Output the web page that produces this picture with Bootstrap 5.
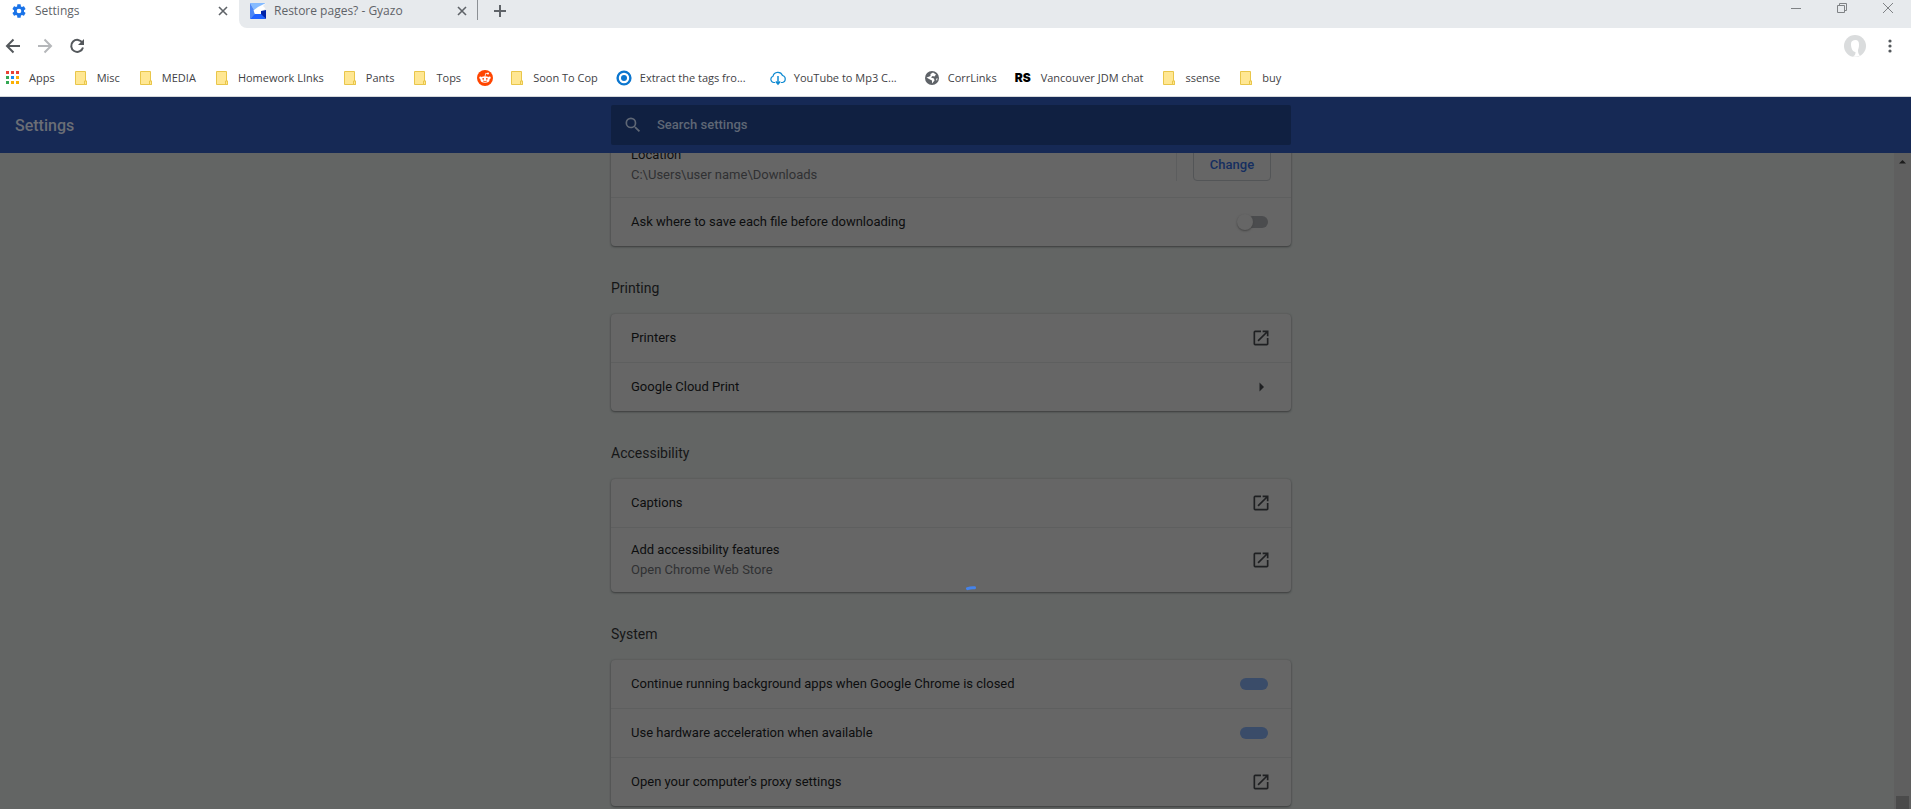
<!DOCTYPE html>
<html lang="en">
<head>
<meta charset="utf-8">
<meta name="viewport" content="width=device-width, initial-scale=1">
<title>Settings</title>
<link href="https://cdn.jsdelivr.net/npm/bootstrap@5.3.0/dist/css/bootstrap.min.css" rel="stylesheet">
<style>
body{font-family:Roboto,"Liberation Sans",sans-serif;font-size:13px;line-height:20px;color:#0d0e0f;background:#636564}
svg{display:block;flex:none}
button{padding:0;border:0;background:none;color:inherit;display:flex;align-items:center;justify-content:center}
.chrome{font-family:"Open Sans","Noto Sans",sans-serif;font-size:11px;line-height:16px;color:#3f4245;background:#fff;border-bottom:1px solid #d5d8db}
.tab-strip{height:28px;font-size:12px}
.tab-a{width:239px;padding:0 11px 6px 11px;color:#5f6368}
.strip-rest{background:#e7eaed;border-bottom-left-radius:8px;color:#5f6368}
.tab-b{width:238px;height:22px;padding:0 10px 0 11px}
.tab-sep{width:1px;height:20px;background:#8c9094}
.new-tab{width:44px;height:22px}
.win-btn{width:46px;height:16px;color:#7f8285}
.toolbar-row{height:36px;padding:0 9px 0 1px}
.tool-btn{width:24px;height:24px;color:#54585c}
.tool-btn:disabled{color:#b5b7ba}
.bookmarks{height:32px;gap:18px;padding:0 5px 4px}
.bookmarks a{display:flex;align-items:center;gap:8px;color:inherit;text-decoration:none;white-space:nowrap}
.bookmarks .long{width:136px}
.bookmarks .icon-only{margin:0 -2px}
.rs-mark{font-family:Inter,"Liberation Sans",sans-serif;font-weight:900;font-size:12px;color:#000;width:18px}
.app-bar{height:56px;background:#162955;padding-right:9px;position:relative}
.app-title{position:absolute;left:15px;top:19px;margin:0;font-size:16px;line-height:20px;font-weight:500;color:#6b6e75}
.page-col{width:100%;max-width:680px}
.search-box{height:40px;background:#102041;border-radius:2px;padding:0 12px;gap:14px;color:#5f6775}
.search-box input{border:0;outline:0;background:none;color:inherit;font-weight:500;font-size:13px;padding:0;line-height:20px}
.search-box input::placeholder{color:#5f6775;opacity:1}
.scroll-area{padding:0 0 3px 8px;min-width:0}
.page-col h2{font-size:14px;line-height:20px;font-weight:400;margin:32px 0 16px;color:#151617}
.panel{background:#666;border-radius:4px;box-shadow:0 1px 2px #3c3e3e,0 0 2px #545656}
.line-item{min-height:48px;padding:0 20px}
.line-item + .line-item{min-height:49px;border-top:1px solid #5e5f5f}
.panel .line-item.two-line{min-height:65px}
.sub{color:#303133}
.icon-box{width:20px;height:20px;color:#1f2022}
.change-wrap{border-left:1px solid #5c5d5e;padding-left:16px}
.change-btn{width:78px;height:32px;border:1px solid #535557;border-radius:4px;color:#152e60;font-weight:500}
.toggle{appearance:none;margin:0 3px 0 0;width:28px;height:12px;border-radius:6px;background:#4b4c4e;position:relative;flex:none}
.toggle:checked{background:#3a4c69}
.toggle:not(:checked)::before{content:"";position:absolute;left:-3px;top:-2px;width:16px;height:16px;border-radius:50%;background:#666;box-shadow:0 1px 2px #444}
.scroll-track{width:17px;background:#5f5f5f;padding:6px 2px 0 2px}
.thumb{height:13px;background:#4b4b4b}
.spinner-arc{position:absolute;left:50%;top:66%;margin-left:10px}
</style>
</head>
<body class="vh-100 d-flex flex-column overflow-hidden">
<svg class="d-none" aria-hidden="true">
  <symbol id="folder" viewBox="0 0 16 16"><path d="M2.500 1.500h10v9.500h1v3.500h-11z" fill="#ffe793" stroke="#e9c64a"/><path d="M11.500 14.500v-3.500h2v3.500z" fill="#ffe793" stroke="#e9c64a"/></symbol>
  <symbol id="ext" viewBox="0 0 24 24"><path fill="currentColor" d="M19 19H5V5h7V3H5a2 2 0 0 0-2 2v14a2 2 0 0 0 2 2h14c1.100 0 2-.9 2-2v-7h-2v7zM14 3v2h3.590l-9.830 9.830 1.410 1.410L19 6.410V10h2V3h-7z"/></symbol>
  <symbol id="cross" viewBox="0 0 10 10"><path d="M1 1l8 8M9 1l-8 8" stroke="currentColor" stroke-width="1.600"/></symbol>
</svg>

<header class="chrome flex-shrink-0">
  <div class="tab-strip d-flex">
    <div class="tab-a d-flex align-items-center">
      <svg width="16" height="16" viewBox="0 0 24 24"><path fill="#1a73e8" d="M19.430 12.980c.04-.32.07-.64.07-.98s-.03-.66-.07-.98l2.110-1.650c.19-.15.24-.42.12-.64l-2-3.460c-.12-.22-.39-.3-.61-.22l-2.490 1c-.52-.4-1.080-.73-1.690-.98l-.38-2.650A.49.49 0 0 0 14 2h-4c-.25 0-.46.18-.49.42l-.38 2.650c-.61.25-1.170.59-1.690.98l-2.490-1c-.23-.09-.49 0-.61.22l-2 3.460c-.13.22-.07.49.12.64l2.110 1.650c-.04.32-.07.65-.07.98s.03.66.07.98l-2.110 1.650c-.19.15-.24.42-.12.64l2 3.460c.12.22.39.3.61.22l2.490-1c.52.4 1.080.73 1.690.98l.38 2.650c.03.24.24.42.49.42h4c.25 0 .46-.18.49-.42l.38-2.650c.61-.25 1.170-.59 1.690-.98l2.490 1c.23.09.49 0 .61-.22l2-3.460c.12-.22.07-.49-.12-.64zM12 15.500a3.500 3.500 0 1 1 0-7 3.500 3.500 0 0 1 0 7z"/></svg>
      <span class="ms-2">Settings</span>
      <button class="ms-auto" aria-label="Close Settings tab"><svg width="10" height="10"><use href="#cross"/></svg></button>
    </div>
    <div class="strip-rest d-flex flex-grow-1">
      <div class="tab-b d-flex align-items-center">
        <svg width="16" height="16" viewBox="0 0 16 16"><path fill="#85bbff" d="M0 0h16l-5 5-7 2z"/><path fill="#4b86f5" d="M0 0l4 7 1 5-5 4z"/><path fill="#1f62ff" d="M0 16l5-5 7 0 4 5z"/><path fill="#fff" d="M16 0v5L11 9v2H5L3.500 7.500 8 4z"/><path fill="#e7eaed" d="M16 0v6l-3-3z"/><path fill="#0023a8" d="M16 7v9l-5-5V8z"/></svg>
        <span class="ms-2">Restore pages? - Gyazo</span>
        <button class="ms-auto" aria-label="Close Gyazo tab"><svg width="10" height="10"><use href="#cross"/></svg></button>
      </div>
      <span class="tab-sep"></span>
      <button class="new-tab" aria-label="New tab"><svg width="12" height="12" viewBox="0 0 12 12"><path d="M6 0v12M0 6h12" stroke="currentColor" stroke-width="2"/></svg></button>
      <div class="d-flex ms-auto">
        <button class="win-btn" aria-label="Minimize"><svg width="10" height="10"><path d="M0 5.500h10" stroke="currentColor"/></svg></button>
        <button class="win-btn" aria-label="Restore"><svg width="10" height="10"><path d="M.5 2.500h7v7h-7zM2.500 2.500v-2h7v7h-2" fill="none" stroke="currentColor"/></svg></button>
        <button class="win-btn" aria-label="Close"><svg width="10" height="10"><path d="M0 0l10 10M10 0L0 10" stroke="currentColor"/></svg></button>
      </div>
    </div>
  </div>

  <div class="toolbar-row d-flex align-items-center gap-2">
    <button class="tool-btn" aria-label="Back"><svg width="16" height="16" viewBox="0 0 16 16"><path d="M15 8H2M8.500 1.500L2 8l6.500 6.500" fill="none" stroke="currentColor" stroke-width="2"/></svg></button>
    <button class="tool-btn" aria-label="Forward" disabled><svg width="16" height="16" viewBox="0 0 16 16"><path d="M1 8h13M7.500 1.500L14 8l-6.500 6.500" fill="none" stroke="currentColor" stroke-width="2"/></svg></button>
    <button class="tool-btn" aria-label="Reload"><svg width="16" height="16" viewBox="0 0 16 16"><path d="M13.500 5A6 6 0 1 0 14 9.500" fill="none" stroke="currentColor" stroke-width="2"/><path d="M15 1v6H9z" fill="currentColor"/></svg></button>
    <button class="ms-auto me-1" aria-label="Profile"><svg width="22" height="22" viewBox="0 0 22 22"><circle cx="11" cy="11" r="11" fill="#dadcdd"/><path d="M7 9c0-3 2-4 4.500-4S15 6.500 15 9.500c0 3-.5 4-1 5.500 0 3 .5 4 2 5.500-3 1.500-6 1.500-7 1 2-1 2.500-2 2.500-4.500-3 0-4.500-4-4.500-8z" fill="#fff"/></svg></button>
    <button class="tool-btn" aria-label="Menu"><svg width="4" height="14" viewBox="0 0 4 14" fill="currentColor"><circle cx="2" cy="2" r="1.600"/><circle cx="2" cy="7" r="1.600"/><circle cx="2" cy="12" r="1.600"/></svg></button>
  </div>

  <nav class="bookmarks d-flex align-items-center" aria-label="Bookmarks">
    <a href="#"><svg width="16" height="16" viewBox="0 0 16 16"><path fill="#ea4335" d="M1 1h3v3H1zM6 1h3v3H6zM11 1h3v3h-3z"/><path fill="#34a853" d="M1 6h3v3H1zM1 11h3v3H1z"/><path fill="#1a8cf0" d="M6 6h3v3H6z"/><path fill="#fbb004" d="M11 6h3v3h-3zM6 11h3v3H6zM11 11h3v3h-3z"/></svg>Apps</a>
    <a href="#"><svg width="16" height="16"><use href="#folder"/></svg>Misc</a>
    <a href="#"><svg width="16" height="16"><use href="#folder"/></svg>MEDIA</a>
    <a href="#"><svg width="16" height="16"><use href="#folder"/></svg>Homework LInks</a>
    <a href="#"><svg width="16" height="16"><use href="#folder"/></svg>Pants</a>
    <a href="#"><svg width="16" height="16"><use href="#folder"/></svg>Tops</a>
    <a href="#" class="icon-only" aria-label="Reddit"><svg width="16" height="16" viewBox="0 0 16 16"><circle cx="8" cy="8" r="8" fill="#ff4500"/><ellipse cx="8" cy="9.500" rx="4.600" ry="3.300" fill="#fff"/><circle cx="3.500" cy="7.700" r="1.200" fill="#fff"/><circle cx="12.500" cy="7.700" r="1.200" fill="#fff"/><circle cx="11" cy="3.600" r="1" fill="#fff"/><path d="M8 6.500l.7-3.200 2.300.4" fill="none" stroke="#fff" stroke-width=".8"/><circle cx="6.200" cy="8.800" r=".9" fill="#ff4500"/><circle cx="9.800" cy="8.800" r=".9" fill="#ff4500"/><path d="M6 11q2 1.200 4 0" fill="none" stroke="#ff4500" stroke-width=".8"/></svg></a>
    <a href="#"><svg width="16" height="16"><use href="#folder"/></svg>Soon To Cop</a>
    <a href="#" class="long"><svg width="16" height="16" viewBox="0 0 16 16"><circle cx="8" cy="8" r="6.400" fill="none" stroke="#0b76cf" stroke-width="2.400"/><circle cx="8" cy="8" r="3" fill="#0b76cf"/></svg>Extract the tags fro...</a>
    <a href="#" class="long"><svg width="16" height="16" viewBox="0 0 16 16"><path d="M5 12.500H3.800A3.200 3.200 0 0 1 3 6.300 5 5 0 0 1 12.500 5.500a3.600 3.600 0 0 1 0 7H11" fill="none" stroke="#118bd2" stroke-width="1.200"/><path d="M8 6v7M5.800 11.500L8 14l2.200-2.500" fill="none" stroke="#118bd2" stroke-width="1.500"/></svg>YouTube to Mp3 C...</a>
    <a href="#"><svg width="16" height="16" viewBox="0 0 16 16"><circle cx="8" cy="8" r="7" fill="#5f6368"/><path d="M9 2.500l3 2-1.500 2-2-.5L7 7.500l3 1 .5 2L8 13.500v-3L5 9 2.500 7.500 4 7l2.500-1V4zM12 9l1.500-1-.5 3z" fill="#fff"/></svg>CorrLinks</a>
    <a href="#"><span class="rs-mark" aria-hidden="true">RS</span>Vancouver JDM chat</a>
    <a href="#"><svg width="16" height="16"><use href="#folder"/></svg>ssense</a>
    <a href="#"><svg width="16" height="16"><use href="#folder"/></svg>buy</a>
  </nav>
</header>

<div class="app-bar d-flex align-items-center justify-content-center flex-shrink-0">
  <h1 class="app-title">Settings</h1>
  <label class="search-box page-col d-flex align-items-center">
    <svg width="20" height="20" viewBox="0 0 24 24"><path fill="currentColor" d="M15.500 14h-.79l-.28-.27A6.470 6.470 0 0 0 16 9.500 6.500 6.500 0 1 0 9.500 16c1.610 0 3.090-.59 4.230-1.570l.27.28v.79l5 4.990L20.490 19l-4.990-5zm-6 0a4.500 4.500 0 1 1 0-9 4.500 4.500 0 0 1 0 9z"/></svg>
    <input class="flex-grow-1" type="search" placeholder="Search settings" aria-label="Search settings">
  </label>
</div>

<div class="d-flex flex-grow-1 position-relative overflow-hidden">
  <main class="scroll-area flex-grow-1 d-flex flex-column justify-content-end align-items-center overflow-hidden">
    <section class="page-col">
      <div class="panel">
        <div class="line-item two-line d-flex align-items-center justify-content-between">
          <div>Location<div class="sub">C:\Users\user name\Downloads</div></div>
          <div class="change-wrap"><button class="change-btn">Change</button></div>
        </div>
        <div class="line-item d-flex align-items-center justify-content-between">
          <label for="ask">Ask where to save each file before downloading</label>
          <input class="toggle" type="checkbox" role="switch" id="ask">
        </div>
      </div>
    </section>
    <section class="page-col">
      <h2>Printing</h2>
      <div class="panel">
        <div class="line-item d-flex align-items-center justify-content-between">Printers
          <button class="icon-box" aria-label="Open printers"><svg width="20" height="20"><use href="#ext"/></svg></button></div>
        <div class="line-item d-flex align-items-center justify-content-between">Google Cloud Print
          <button class="icon-box" aria-label="Google Cloud Print"><svg width="5" height="10" viewBox="0 0 5 10"><path d="M.5 0.500L5 5 .5 9.500z" fill="currentColor"/></svg></button></div>
      </div>
    </section>
    <section class="page-col">
      <h2>Accessibility</h2>
      <div class="panel">
        <div class="line-item d-flex align-items-center justify-content-between">Captions
          <button class="icon-box" aria-label="Open captions"><svg width="20" height="20"><use href="#ext"/></svg></button></div>
        <div class="line-item two-line d-flex align-items-center justify-content-between">
          <div>Add accessibility features<div class="sub">Open Chrome Web Store</div></div>
          <button class="icon-box" aria-label="Open Chrome Web Store"><svg width="20" height="20"><use href="#ext"/></svg></button></div>
      </div>
    </section>
    <section class="page-col">
      <h2>System</h2>
      <div class="panel">
        <div class="line-item d-flex align-items-center justify-content-between">
          <label for="bg">Continue running background apps when Google Chrome is closed</label>
          <input class="toggle" type="checkbox" role="switch" id="bg" checked></div>
        <div class="line-item d-flex align-items-center justify-content-between">
          <label for="hw">Use hardware acceleration when available</label>
          <input class="toggle" type="checkbox" role="switch" id="hw" checked></div>
        <div class="line-item d-flex align-items-center justify-content-between">Open your computer's proxy settings
          <button class="icon-box" aria-label="Open proxy settings"><svg width="20" height="20"><use href="#ext"/></svg></button></div>
      </div>
    </section>
  </main>
  <div class="scroll-track d-flex flex-column justify-content-between flex-shrink-0" aria-hidden="true">
    <svg class="mx-auto" width="7" height="5" viewBox="0 0 7 5"><path d="M0 4.500L3.500 1 7 4.500z" fill="#1c1c1c"/></svg>
    <div class="thumb"></div>
  </div>
  <svg class="spinner-arc" width="10" height="5" viewBox="0 0 10 5" role="img" aria-label="Loading"><path d="M1.500 2.600Q5 1.400 8.500 1.800" fill="none" stroke="#4583ea" stroke-width="3" stroke-linecap="round"/></svg>
</div>
<script src="https://cdn.jsdelivr.net/npm/bootstrap@5.3.0/dist/js/bootstrap.bundle.min.js"></script>
</body>
</html>
